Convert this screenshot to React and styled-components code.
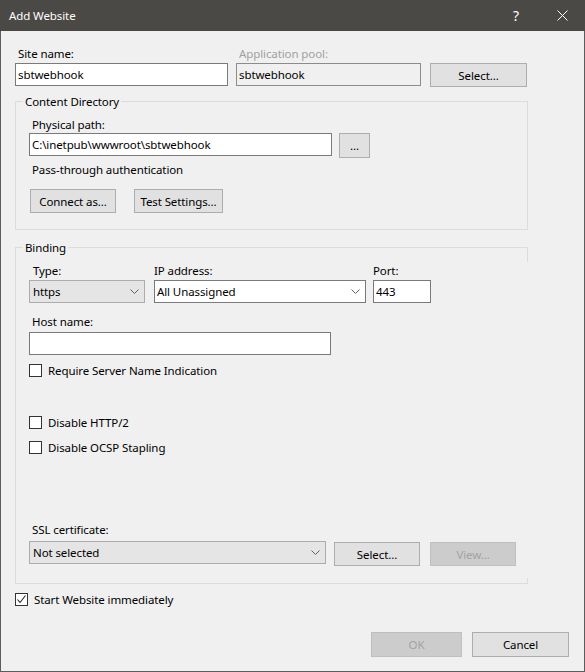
import React from "react";
import styled, { createGlobalStyle } from "styled-components";

const GlobalStyle = createGlobalStyle`
  * { box-sizing: border-box; }
  html, body { margin: 0; padding: 0; background: #f0f0f0; }
  body {
    font-family: "Noto Sans", "Segoe UI", "Liberation Sans", sans-serif;
    font-size: 11.5px;
    letter-spacing: -0.1px;
    color: #000;
  }
`;

const Window = styled.div`
  width: 585px;
  height: 672px;
  background: #f0f0f0;
  display: flex;
  flex-direction: column;
  box-shadow: inset 1px 0 #5c5c5c, inset -1px 0 #5c5c5c, inset 0 -1px #5c5c5c;
`;

const TitleBar = styled.div`
  height: 31px;
  flex: none;
  background: #4b4946;
  color: #fff;
  display: flex;
  align-items: center;
  padding-left: 9px;
`;

const Title = styled.div`
  flex: 1;
  line-height: 15px;
`;

const CaptionButton = styled.div`
  width: 46px;
  height: 31px;
  display: flex;
  align-items: center;
  justify-content: center;
  font-size: 14px;
  color: #fff;
`;

const Body = styled.div`
  flex: 1;
  display: flex;
  flex-direction: column;
  padding: 15px 0 0 15px;
`;

const Row = styled.div`
  display: flex;
  align-items: ${(p) => p.$align || "flex-start"};
  margin-top: ${(p) => p.$mt || 0}px;
  margin-left: ${(p) => p.$ml || 0}px;
`;

const Field = styled.div`
  display: flex;
  flex-direction: column;
  width: ${(p) => p.$w}px;
  margin-left: ${(p) => p.$ml || 0}px;
`;

const Label = styled.div`
  line-height: 15px;
  height: 15px;
  white-space: nowrap;
  padding-left: ${(p) => (p.$pl === undefined ? 3 : p.$pl)}px;
  margin-top: ${(p) => p.$mt || 0}px;
  color: ${(p) => (p.$disabled ? "#a0a0a0" : "#000")};
`;

const TextBox = styled.div`
  width: ${(p) => (p.$w ? `${p.$w}px` : "100%")};
  height: 23px;
  margin-top: ${(p) => (p.$mt === undefined ? 2 : p.$mt)}px;
  border: 1px solid ${(p) => (p.$readOnly ? "#8c8c8c" : "#7a7a7a")};
  background: ${(p) => (p.$readOnly ? "#f0f0f0" : "#fff")};
  padding-left: 2px;
  display: flex;
  align-items: center;
  white-space: nowrap;
  overflow: hidden;
  flex: none;
`;

const Combo = styled.div`
  width: ${(p) => (p.$w ? `${p.$w}px` : "100%")};
  height: 23px;
  margin-top: ${(p) => (p.$mt === undefined ? 2 : p.$mt)}px;
  border: 1px solid ${(p) => (p.$flat ? "#acacac" : "#7a7a7a")};
  background: ${(p) => (p.$flat ? "#e5e5e5" : "#fff")};
  padding: 0 5px 0 ${(p) => (p.$flat ? 3 : 2)}px;
  display: flex;
  align-items: center;
  justify-content: space-between;
  white-space: nowrap;
  flex: none;
`;

const Button = styled.div`
  width: ${(p) => p.$w}px;
  height: ${(p) => p.$h || 24}px;
  margin-left: ${(p) => p.$ml || 0}px;
  margin-top: ${(p) => p.$mt || 0}px;
  border: 1px solid ${(p) => (p.$disabled ? "#bfbfbf" : "#adadad")};
  background: ${(p) => (p.$disabled ? "#cccccc" : "#e1e1e1")};
  color: ${(p) => (p.$disabled ? "#a3a3a3" : "#000")};
  display: flex;
  align-items: center;
  justify-content: center;
  white-space: nowrap;
  flex: none;
  line-height: 15px;
`;

const GroupBox = styled.fieldset`
  margin: ${(p) => p.$mt || 0}px 0 0 0;
  padding: 0;
  width: 513px;
  min-width: 0;
  border: 1px solid #dcdcdc;
  ${(p) =>
    p.$brokenRight &&
    `
    border-right-color: transparent;
    background:
      linear-gradient(#dcdcdc, #dcdcdc) right top / 1px 15px no-repeat border-box,
      linear-gradient(#dcdcdc, #dcdcdc) right bottom / 1px 6px no-repeat border-box;
  `}
`;

const Legend = styled.legend`
  margin-left: 7px;
  padding: 0 2px;
  line-height: 15px;
  height: 15px;
`;

const GroupInner = styled.div`
  display: flex;
  flex-direction: column;
  padding: 8px 0 ${(p) => p.$pb}px 13px;
`;

const Text = styled.div`
  line-height: 15px;
  height: 15px;
  padding-left: 3px;
  margin-top: ${(p) => p.$mt || 0}px;
`;

const CheckRow = styled.div`
  display: flex;
  align-items: center;
  height: 15px;
  margin-top: ${(p) => p.$mt || 0}px;
`;

const Box = styled.span`
  width: 13px;
  height: 13px;
  border: 1px solid #333;
  background: #fff;
  flex: none;
  display: flex;
  align-items: center;
  justify-content: center;
`;

const CheckText = styled.span`
  margin-left: 6px;
  line-height: 15px;
  white-space: nowrap;
`;

const Footer = styled.div`
  display: flex;
  justify-content: flex-end;
  padding-right: 16px;
  margin-top: 25px;
`;

const Chevron = () => (
  <svg width="9" height="5" viewBox="0 0 9 5">
    <polyline points="0.5,0.5 4.5,4.5 8.5,0.5" fill="none" stroke="#606060" strokeWidth="1" />
  </svg>
);

const CloseGlyph = () => (
  <svg width="11" height="11" viewBox="0 0 11 11">
    <path d="M0.5 0.5 L10.5 10.5 M10.5 0.5 L0.5 10.5" stroke="#fff" strokeWidth="1" fill="none" />
  </svg>
);

const CheckMark = () => (
  <svg width="11" height="11" viewBox="0 0 11 11">
    <polyline points="1.5,5.5 4,8.5 9.5,1.5" fill="none" stroke="#222" strokeWidth="1.1" />
  </svg>
);

const Checkbox = ({ checked, children, mt }) => (
  <CheckRow $mt={mt}>
    <Box>{checked && <CheckMark />}</Box>
    <CheckText>{children}</CheckText>
  </CheckRow>
);

export default function App() {
  return (
    <>
      <GlobalStyle />
      <Window>
        <TitleBar>
          <Title>Add Website</Title>
          <CaptionButton>?</CaptionButton>
          <CaptionButton>
            <CloseGlyph />
          </CaptionButton>
        </TitleBar>
        <Body>
          <Row>
            <Field $w={213}>
              <Label>Site name:</Label>
              <TextBox>sbtwebhook</TextBox>
            </Field>
            <Field $w={185} $ml={8}>
              <Label $disabled>Application pool:</Label>
              <TextBox $readOnly>sbtwebhook</TextBox>
            </Field>
            <Button $w={97} $ml={9} $mt={17}>Select...</Button>
          </Row>

          <GroupBox $mt={7}>
            <Legend>Content Directory</Legend>
            <GroupInner $pb={16}>
              <Label>Physical path:</Label>
              <Row $mt={1}>
                <TextBox $w={303} $mt={0}>
                  C:\inetpub\wwwroot\sbtwebhook
                </TextBox>
                <Button $w={31} $h={25} $ml={7}>...</Button>
              </Row>
              <Text $mt={4}>Pass-through authentication</Text>
              <Row $mt={12} $ml={1}>
                <Button $w={86}>Connect as...</Button>
                <Button $w={89} $ml={18}>Test Settings...</Button>
              </Row>
            </GroupInner>
          </GroupBox>

          <GroupBox $mt={10} $brokenRight>
            <Legend>Binding</Legend>
            <GroupInner $pb={17}>
              <Row>
                <Field $w={116}>
                  <Label $pl={4}>Type:</Label>
                  <Combo $flat>
                    <span>https</span>
                    <Chevron />
                  </Combo>
                </Field>
                <Field $w={212} $ml={9}>
                  <Label $pl={0}>IP address:</Label>
                  <Combo>
                    <span>All Unassigned</span>
                    <Chevron />
                  </Combo>
                </Field>
                <Field $w={58} $ml={7}>
                  <Label $pl={0}>Port:</Label>
                  <TextBox>443</TextBox>
                </Field>
              </Row>
              <Label $mt={11}>Host name:</Label>
              <TextBox $w={302} $mt={3} />
              <Checkbox mt={8}>Require Server Name Indication</Checkbox>
              <Checkbox mt={37}>Disable HTTP/2</Checkbox>
              <Checkbox mt={10}>Disable OCSP Stapling</Checkbox>
              <Label $mt={67}>SSL certificate:</Label>
              <Row $mt={4}>
                <Combo $flat $w={297} $mt={0}>
                  <span>Not selected</span>
                  <Chevron />
                </Combo>
                <Button $w={86} $ml={8} $mt={1}>Select...</Button>
                <Button $w={86} $ml={10} $mt={1} $disabled>View...</Button>
              </Row>
            </GroupInner>
          </GroupBox>

          <Checkbox mt={8} checked>Start Website immediately</Checkbox>

          <Footer>
            <Button $w={91} $h={25} $disabled>OK</Button>
            <Button $w={97} $h={25} $ml={10}>Cancel</Button>
          </Footer>
        </Body>
      </Window>
    </>
  );
}
